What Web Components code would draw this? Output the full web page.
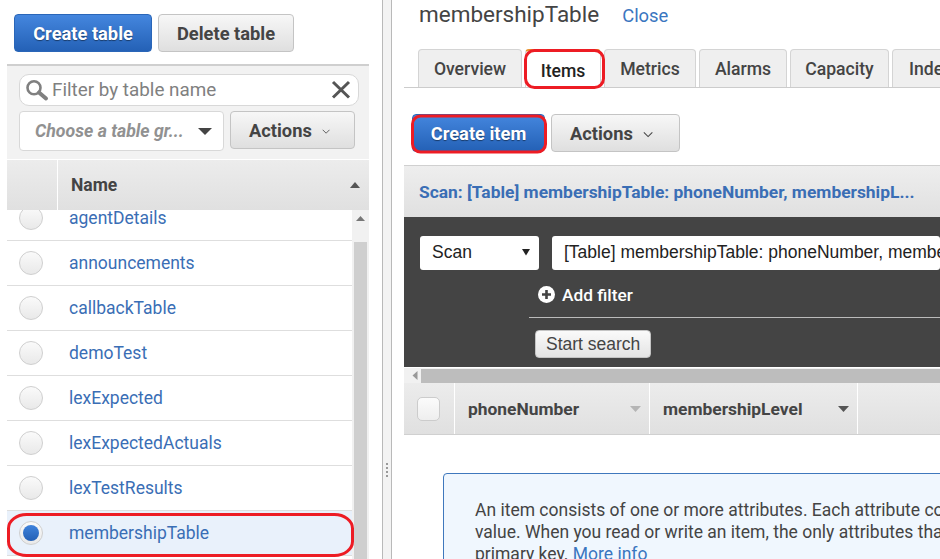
<!DOCTYPE html>
<html>
<head>
<meta charset="utf-8">
<title>membershipTable</title>
<style>
  html, body { margin: 0; padding: 0; background: #fff; }
  body { font: 16px Roboto, "Liberation Sans", sans-serif; color: #444; }
</style>
</head>
<body>
<ddb-console>
  <ddb-sidebar>
    <ddb-button variant="primary" slot="toolbar" style="width:138px" full>Create table</ddb-button>
    <ddb-button slot="toolbar" style="width:136px" full>Delete table</ddb-button>
    <table-row>agentDetails</table-row>
    <table-row>announcements</table-row>
    <table-row>callbackTable</table-row>
    <table-row>demoTest</table-row>
    <table-row>lexExpected</table-row>
    <table-row>lexExpectedActuals</table-row>
    <table-row>lexTestResults</table-row>
    <table-row selected>membershipTable</table-row>
    <table-row></table-row>
  </ddb-sidebar>
  <ddb-detail slot="right"></ddb-detail>
</ddb-console>

<script>
/* ---- ddb-button ---- */
const buttonTemplate = document.createElement('template');
buttonTemplate.innerHTML = `
  <style>
    :host { display: inline-flex; }
    button {
      height: 38px;
      padding: 0 18px;
      box-sizing: border-box;
      display: inline-flex;
      align-items: center;
      gap: 10px;
      border: 1px solid #c4c4c4;
      border-radius: 4px;
      background: linear-gradient(#f7f7f7, #dfdfdf);
      color: #444;
      font: 700 18.3px Roboto, sans-serif;
      white-space: nowrap;
    }
    :host([variant="primary"]) button {
      border-color: #2a66b8;
      background: linear-gradient(#4486de, #2461b6);
      color: #fff;
      text-shadow: 0 1px 1px rgba(0,0,0,.45);
    }
    :host([small]) button {
      height: 28px;
      padding: 0 10px;
      font-weight: 400;
      font-size: 17.5px;
      font-family: "Liberation Sans", sans-serif;
      background: linear-gradient(#fafafa, #e4e4e4);
      color: #444;
    }
    :host([full]), :host([full]) button { width: 100%; }
    :host([full]) button { justify-content: center; }
  </style>
  <button type="button"><slot></slot><slot name="after"></slot></button>
`;
class DdbButton extends HTMLElement {
  constructor() {
    super();
    this.attachShadow({ mode: 'open' }).appendChild(buttonTemplate.content.cloneNode(true));
  }
}
customElements.define('ddb-button', DdbButton);

/* ---- table-row ---- */
const rowTemplate = document.createElement('template');
rowTemplate.innerHTML = `
  <style>
    :host {
      display: flex;
      align-items: center;
      height: 45px;
      box-sizing: border-box;
      border-bottom: 1px solid #dedede;
      background: #fff;
      flex-shrink: 0;
    }
    :host([selected]) { background: #e9f1fb; }
    .radio {
      width: 24px;
      height: 24px;
      box-sizing: border-box;
      margin-left: 12px;
      border-radius: 50%;
      border: 1px solid #cfcfcf;
      background: linear-gradient(#fafafa, #e9e9e9);
      display: flex;
      align-items: center;
      justify-content: center;
    }
    :host([selected]) .radio::after {
      content: "";
      width: 16px;
      height: 16px;
      border-radius: 50%;
      background: linear-gradient(#3f83dc, #2460b5);
    }
    .name {
      margin-left: 26px;
      color: #3a6eb5;
      font: 17.5px Roboto, sans-serif;
    }
  </style>
  <span class="radio"></span><span class="name"><slot></slot></span>
`;
class TableRow extends HTMLElement {
  constructor() {
    super();
    this.attachShadow({ mode: 'open' }).appendChild(rowTemplate.content.cloneNode(true));
  }
}
customElements.define('table-row', TableRow);

/* ---- ddb-sidebar ---- */
const sidebarTemplate = document.createElement('template');
sidebarTemplate.innerHTML = `
  <style>
    :host {
      display: flex;
      flex-direction: column;
      height: 559px;
      box-sizing: border-box;
      padding-left: 7px;
      padding-right: 13px;
      position: relative;
      overflow: hidden;
      font-family: Roboto, sans-serif;
    }
    .toolbar {
      display: flex;
      gap: 6px;
      padding: 14px 0 12px 7px;
      flex-shrink: 0;
    }
    .filters {
      height: 95px;
      box-sizing: border-box;
      background: #f2f2f2;
      border-top: 2px solid #cfcfcf;
      padding: 8px 10px 0 12px;
      flex-shrink: 0;
    }
    .search {
      height: 32px;
      box-sizing: border-box;
      width: 340px;
      border: 1px solid #d8d8d8;
      border-radius: 10px;
      background: #fff;
      display: flex;
      align-items: center;
      padding: 0 7px 0 6px;
      color: #808080;
      font-size: 18.85px;
    }
    .search span { flex: 1; }
    .row2 { display: flex; gap: 6px; margin-top: 5px; }
    .select {
      width: 205px;
      height: 40px;
      box-sizing: border-box;
      border: 1px solid #d8d8d8;
      border-radius: 4px;
      background: #fff;
      display: flex;
      align-items: center;
      justify-content: space-between;
      padding: 0 11px 0 15px;
      color: #919191;
      font: italic 700 17.7px Roboto, sans-serif;
      white-space: nowrap;
    }
    .actions { width: 125px; }
    .thead {
      display: flex;
      height: 51px;
      flex-shrink: 0;
      background: linear-gradient(#ececec, #e0e0e0);
      border-top: 1px solid #fff;
      box-sizing: border-box;
    }
    .thead .check { width: 50px; border-right: 1px solid #fff; }
    .thead .name {
      flex: 1;
      display: flex;
      align-items: center;
      justify-content: space-between;
      padding: 0 9px 0 13px;
      font-weight: 700;
      font-size: 17.5px;
      color: #444;
    }
    .body { flex: 1; display: flex; min-height: 0; overflow: hidden; }
    .rows {
      flex: 1;
      min-width: 0;
      display: flex;
      flex-direction: column;
      margin-top: -14px;
    }
    .bar {
      width: 17px;
      box-sizing: border-box;
      padding: 0 2px;
      background: #f1f1f1;
      display: flex;
      flex-direction: column;
      align-items: center;
      flex-shrink: 0;
    }
    .bar .arrow { margin: 6px 0 0; }
    .bar .thumb { width: 13px; flex: 1; margin-top: 21px; background: #cfcfcf; }
    svg { display: block; }
    .ring {
      position: absolute;
      left: 7px;
      top: 513px;
      pointer-events: none;
    }
  </style>
  <div class="toolbar"><slot name="toolbar"></slot></div>
  <div class="filters">
    <div class="search">
      <svg width="26" height="26" viewBox="0 0 26 26">
        <circle cx="8" cy="10.800" r="6.500" fill="#fff" stroke="#808080" stroke-width="2.600"/>
        <path d="M13 15.500l7 6" stroke="#808080" stroke-width="4" stroke-linecap="round"/>
      </svg>
      <span>Filter by table name</span>
      <svg width="20" height="20" viewBox="0 0 20 20"><path d="M2 2l16 15.500M18 2L2 17.500" stroke="#555" stroke-width="3"/></svg>
    </div>
    <div class="row2">
      <div class="select">Choose a table gr...
        <svg width="14" height="7" viewBox="0 0 14 7"><path d="M0 0h14L7 7z" fill="#444"/></svg>
      </div>
      <ddb-button class="actions" full>Actions<svg slot="after" width="12" height="7" viewBox="0 0 12 7" style="display:block;margin:3px 6px 0 0"><path d="M1 1l5 5 5-5" fill="none" stroke="#444" stroke-width="1.200"/></svg></ddb-button>
    </div>
  </div>
  <div class="thead">
    <div class="check"></div>
    <div class="name">Name
      <svg width="10" height="6" viewBox="0 0 10 6"><path d="M0 6h10L5 0z" fill="#555"/></svg>
    </div>
  </div>
  <div class="body">
    <div class="rows"><slot></slot></div>
    <div class="bar">
      <svg class="arrow" width="9" height="5" viewBox="0 0 9 5"><path d="M0 5h9L4.500 0z" fill="#777"/></svg>
      <div class="thumb"></div>
    </div>
  </div>
  <svg class="ring" width="347" height="44" viewBox="0 0 347 44"><rect x="1.500" y="1.500" width="344" height="41" rx="18" ry="14" fill="none" stroke="#ed1c24" stroke-width="3"/></svg>
`;
class DdbSidebar extends HTMLElement {
  constructor() {
    super();
    this.attachShadow({ mode: 'open' }).appendChild(sidebarTemplate.content.cloneNode(true));
  }
}
customElements.define('ddb-sidebar', DdbSidebar);

/* ---- ddb-detail ---- */
const detailTemplate = document.createElement('template');
detailTemplate.innerHTML = `
  <style>
    :host {
      display: flex;
      flex-direction: column;
      height: 559px;
      overflow: hidden;
      position: relative;
      font-family: Roboto, sans-serif;
    }
    .title {
      height: 49px;
      box-sizing: border-box;
      flex-shrink: 0;
      display: flex;
      align-items: baseline;
      gap: 23px;
      padding: 0 0 0 15px;
      color: #444;
      font-size: 22.5px;
      line-height: 29px;
    }
    .title a { color: #3a76c0; font-size: 18.4px; }
    .tabs {
      height: 39px;
      flex-shrink: 0;
      box-sizing: border-box;
      display: flex;
      gap: 3px;
      padding-left: 14px;
      border-bottom: 1px solid #ccc;
      overflow: hidden;
    }
    .tab {
      box-sizing: border-box;
      height: 38px;
      display: flex;
      align-items: center;
      justify-content: center;
      background: #efefef;
      border: 1px solid #d4d4d4;
      border-bottom: 0;
      border-radius: 4px 4px 0 0;
      font-weight: 500;
      font-size: 17.6px;
      color: #444;
      flex-shrink: 0;
    }
    .tab.active {
      height: 39px;
      background: #fff;
      color: #222;
      border-top: 2px solid #e8912d;
      padding-top: 3px;
    }
    .actions {
      height: 77px;
      flex-shrink: 0;
      box-sizing: border-box;
      padding: 26px 0 0 8px;
      display: flex;
      gap: 6px;
    }
    .scan {
      height: 52px;
      flex-shrink: 0;
      box-sizing: border-box;
      border-top: 1px solid #d0d0d0;
      background: linear-gradient(#eeeeee, #e0e0e0);
      padding: 0 15px;
      display: flex;
      align-items: center;
      color: #3a6eb5;
      font-weight: 700;
      font-size: 17.4px;
      white-space: nowrap;
    }
    .dark {
      height: 150px;
      flex-shrink: 0;
      box-sizing: border-box;
      background: #444;
      padding: 19px 0 0 16px;
      font-family: "Liberation Sans", sans-serif;
    }
    .query { display: flex; gap: 13px; }
    .field {
      height: 34px;
      box-sizing: border-box;
      background: #fff;
      border-radius: 3px;
      display: flex;
      align-items: center;
      padding: 0 12px 2px;
      color: #222;
      font-size: 17.500px;
      white-space: nowrap;
      overflow: hidden;
    }
    .field.type { width: 119px; justify-content: space-between; padding-right: 9px; flex-shrink: 0; }
    .field.index { flex: 1; min-width: 0; }
    .filter {
      margin-left: 109px;
      height: 48px;
      box-sizing: border-box;
      border-bottom: 1px solid #bbb;
      display: flex;
      align-items: center;
      gap: 7px;
      padding: 2px 0 0 9px;
      color: #fff;
      font: 500 17.300px Roboto, sans-serif;
    }
    .search-row { padding: 12px 0 0 115px; }
    .hbar { height: 15px; flex-shrink: 0; display: flex; background: #f1f1f1; align-items: center; margin-top: 1px; }
    .hbar .arrow { margin-left: 5px; width: 12px; }
    .hbar .thumb { flex: 1; height: 14px; background: #bdbdbd; }
    .thead {
      height: 52px;
      flex-shrink: 0;
      box-sizing: border-box;
      display: flex;
      background: linear-gradient(#ececec, #e0e0e0);
      border-bottom: 1px solid #d0d0d0;
      font-weight: 700;
      font-size: 17.400px;
      color: #444;
    }
    .cell { display: flex; align-items: center; box-sizing: border-box; border-right: 1px solid #fff; justify-content: space-between; }
    .cell.check { width: 51px; padding-left: 13px; }
    .cell.check i { width: 23px; height: 24px; box-sizing: border-box; border: 1px solid #ccc; border-radius: 5px; background: linear-gradient(#fbfbfb, #eeeeee); margin-right: 14px; }
    .cell.phone { width: 195px; padding: 0 8px 0 13px; }
    .cell.level { width: 208px; padding: 0 8px 0 13px; }
    .info {
      margin: 38px -40px 0 39px;
      box-sizing: border-box;
      height: 120px;
      flex-shrink: 0;
      background: #f0f7fe;
      border: 1px solid #3f78bd;
      border-radius: 4px;
      padding: 25px 0 0 31px;
      font-size: 17.500px;
      line-height: 22px;
      color: #444;
      white-space: nowrap;
    }
    .info a { color: #3a76c0; }
    svg { display: block; }
    .mark { position: absolute; pointer-events: none; }
    .mark rect { fill: none; stroke: #ed1c24; stroke-width: 3; }
  </style>
  <div class="title"><span>membershipTable</span><a>Close</a></div>
  <div class="tabs">
    <div class="tab" style="width:104px">Overview</div>
    <div class="tab active" style="width:76px">Items</div>
    <div class="tab" style="width:92px">Metrics</div>
    <div class="tab" style="width:88px">Alarms</div>
    <div class="tab" style="width:99px">Capacity</div>
    <div class="tab" style="width:70px;justify-content:flex-start;padding-left:16px">Indexes</div>
  </div>
  <div class="actions">
    <ddb-button variant="primary" style="width:133px" full>Create item</ddb-button>
    <ddb-button style="width:129px" full>Actions<svg slot="after" width="12" height="7" viewBox="0 0 12 7" style="display:block;margin:3px 8px 0 0"><path d="M1 1l5 5 5-5" fill="none" stroke="#444" stroke-width="1.200"/></svg></ddb-button>
  </div>
  <div class="scan">Scan: [Table] membershipTable: phoneNumber, membershipL...</div>
  <div class="dark">
    <div class="query">
      <div class="field type">Scan <svg width="8" height="8" viewBox="0 0 8 8"><path d="M0 1h8L4 7.500z" fill="#222"/></svg></div>
      <div class="field index">[Table] membershipTable: phoneNumber, membershipLevel</div>
    </div>
    <div class="filter">
      <svg width="17" height="17" viewBox="0 0 17 17"><circle cx="8.500" cy="8.500" r="8.500" fill="#fff"/><path d="M8.500 4v9M4 8.500h9" stroke="#444" stroke-width="2.600"/></svg>
      Add filter
    </div>
    <div class="search-row"><ddb-button small>Start search</ddb-button></div>
  </div>
  <div class="hbar">
    <svg class="arrow" width="5" height="9" viewBox="0 0 5 9"><path d="M5 0v9L0 4.500z" fill="#999"/></svg>
    <div class="thumb"></div>
  </div>
  <div class="thead">
    <div class="cell check"><i></i></div>
    <div class="cell phone">phoneNumber <svg width="11" height="6" viewBox="0 0 11 6"><path d="M0 0h11L5.500 6z" fill="#b5b5b5"/></svg></div>
    <div class="cell level">membershipLevel <svg width="11" height="6" viewBox="0 0 11 6"><path d="M0 0h11L5.500 6z" fill="#555"/></svg></div>
  </div>
  <div class="info">An item consists of one or more attributes. Each attribute consists of a name, a data type, and a<br>value. When you read or write an item, the only attributes that are required are those that make up the<br>primary key. <a>More info</a></div>
  <svg class="mark" style="left:117px;top:48px" width="88" height="42" viewBox="0 0 88 42"><rect x="4.500" y="2.500" width="78" height="37" rx="9"/></svg>
  <svg class="mark" style="left:6px;top:112px" width="138" height="44" viewBox="0 0 138 44"><rect x="2.500" y="4" width="133" height="36" rx="8"/></svg>
`;
class DdbDetail extends HTMLElement {
  constructor() {
    super();
    this.attachShadow({ mode: 'open' }).appendChild(detailTemplate.content.cloneNode(true));
  }
}
customElements.define('ddb-detail', DdbDetail);

/* ---- ddb-console: two panes with a drag handle between ---- */
const consoleTemplate = document.createElement('template');
consoleTemplate.innerHTML = `
  <style>
    :host {
      display: grid;
      grid-template-columns: 382px 10px 12px 1fr;
      width: 940px;
      height: 559px;
      overflow: hidden;
      background: #fff;
    }
    .handle {
      box-sizing: border-box;
      background: #f3f3f3;
      border-left: 1px solid #b9b9b9;
      border-right: 1px solid #b9b9b9;
      display: flex;
      flex-direction: column;
      align-items: center;
      justify-content: center;
      gap: 2px;
      padding-top: 380px;
    }
    .handle i { width: 2px; height: 2px; background: #9a9a9a; }
    .right { min-width: 0; overflow: hidden; }
  </style>
  <div class="left"><slot></slot></div>
  <div class="handle"><i></i><i></i><i></i><i></i></div>
  <div></div>
  <div class="right"><slot name="right"></slot></div>
`;
class DdbConsole extends HTMLElement {
  constructor() {
    super();
    this.attachShadow({ mode: 'open' }).appendChild(consoleTemplate.content.cloneNode(true));
  }
}
customElements.define('ddb-console', DdbConsole);
</script>
</body>
</html>
